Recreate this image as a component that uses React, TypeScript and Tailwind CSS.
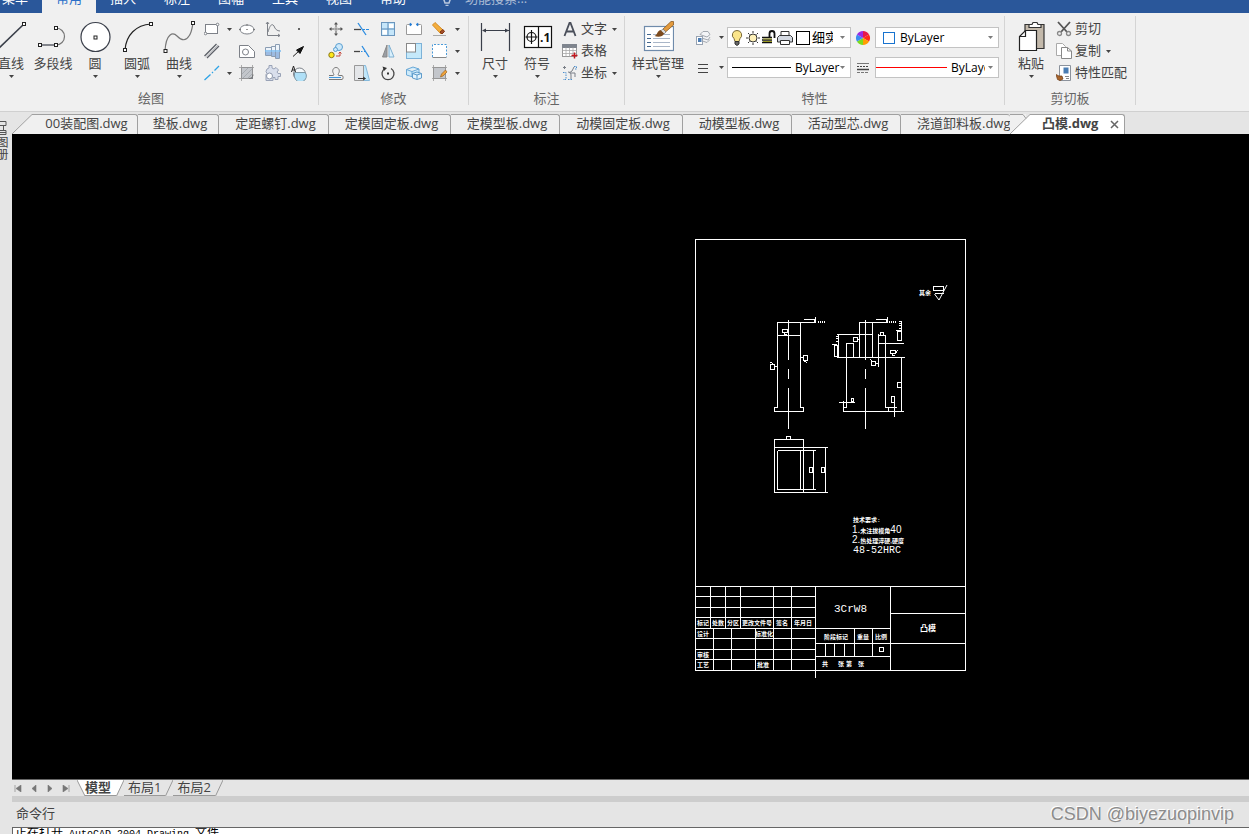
import React from "react";
import { clsx } from "clsx";

const Caret = ({ className }: { className?: string }) => (
  <svg className={clsx("h-[3px] w-[5px] shrink-0", className)} viewBox="0 0 5 3" fill="#444">
    <path d="M0 0h5L2.5 3z" />
  </svg>
);

/* ---------- Large ribbon icons (32 x 32) ---------- */

const Big = ({ children }: { children: React.ReactNode }) => (
  <svg className="size-8 shrink-0" viewBox="0 0 32 32" fill="none" stroke="#3a3f4a" strokeWidth="1.2">
    {children}
  </svg>
);

const Node = ({ x, y }: { x: number; y: number }) => (
  <rect x={x - 1.5} y={y - 1.5} width="3" height="3" fill="#fff" stroke="#222" strokeWidth="1" />
);

const LineIcon = () => (
  <Big>
    <path d="M2 29 29 3" strokeWidth="1.6" />
    <Node x={29} y={3} />
  </Big>
);

const PolylineIcon = () => (
  <Big>
    <path d="M3 24h16" />
    <path d="M19 24a8.5 8.5 0 0 0 0-17" stroke="#777" />
    <Node x={19} y={7} />
    <Node x={3} y={24} />
    <Node x={19} y={24} />
  </Big>
);

const CircleIcon = () => (
  <Big>
    <circle cx="16.5" cy="16" r="14.5" fill="#fff" />
    <Node x={16.5} y={16.5} />
  </Big>
);

const ArcIcon = () => (
  <Big>
    <path d="M4 29C5 14 15 4 30 3" stroke="#222" />
    <Node x={4} y={29} />
    <Node x={30} y={3} />
  </Big>
);

const CurveIcon = () => (
  <Big>
    <path d="M2 30C3 12 10 11 14 15c5 5 9 5 12 0 3-4 3-8 4-13" stroke="#777" />
    <Node x={2.5} y={30} />
    <Node x={30} y={2} />
  </Big>
);

const DimensionIcon = () => (
  <Big>
    <path d="M2.5 2v28M30.5 2v28M4 9.5h26" />
    <path d="M3 9.5 7 7.5v4zM30 9.5l-4-2v4z" fill="#3a3f4a" stroke="none" />
  </Big>
);

const SymbolIcon = () => (
  <Big>
    <rect x="3.5" y="5.5" width="27" height="21" fill="#fff" stroke="#111" />
    <path d="M17.500 5.500v21M10.500 9v14M4.500 16h12" stroke="#111" />
    <circle cx="10.5" cy="16" r="4.5" stroke="#111" />
    <text x="19" y="21" fontSize="12" fontWeight="700" fontFamily="Open Sans, sans-serif" fill="#111" stroke="none">
      .1
    </text>
  </Big>
);

const StyleIcon = () => (
  <Big>
    <rect x="2.5" y="5.5" width="29" height="24" fill="#fff" stroke="#6f8bab" />
    <path d="M5 13.500h4M5 17.500h4M5 21.500h4M5 25.500h4" stroke="#44678e" strokeWidth="1" />
    <path d="M11 13.500h17M11 17.500h17M11 21.500h17M11 25.500h17" stroke="#a9b6c8" strokeWidth="1" />
    <path d="M21 8 29 .5h2.500v3.500l-8 7z" fill="#e39a3c" stroke="#8a5a22" strokeWidth=".8" />
    <path d="M21 8l3 3-2 2-3.500-3z" fill="#ddd" stroke="#666" strokeWidth=".6" />
    <path d="M18.500 9l3.500 3.500c-1 3.500-6 4-9.500 2.500 3-1 2.500-5 6-6z" fill="#7c4a1d" stroke="none" />
  </Big>
);

const PasteIcon = () => (
  <Big>
    <path d="M10 3.500h19v24H10z" fill="#c3b9ab" stroke="#333" />
    <path d="M14 6.500V3.500h3l1-2h4l1 2h3v3z" fill="#fff" stroke="#333" />
    <path d="M10.500 9.500h11v20h-17v-14z" fill="#fff" stroke="#222" />
    <path d="M10.500 9.500v6h-6" stroke="#222" />
  </Big>
);

/* ---------- Small ribbon icons (16 x 16) ---------- */

const Small = ({ children }: { children?: React.ReactNode }) => (
  <svg className="size-4 shrink-0" viewBox="0 0 16 16" fill="none" stroke="#7d8188" strokeWidth="1">
    {children}
  </svg>
);

const RectIcon = () => (
  <Small>
    <rect x="1.500" y="3.500" width="12" height="9" fill="#fff" />
    <circle cx="1.500" cy="12.500" r="1.300" fill="#fff" />
    <circle cx="13.500" cy="3.500" r="1.300" fill="#fff" />
  </Small>
);
const DoubleLineIcon = () => (
  <Small>
    <path d="M.5 13 12.500 1M3 15 15 3" stroke="#5d6068" strokeWidth="1.300" />
    <path d="M1.500 14 14 2" stroke="#b5b7bb" />
  </Small>
);
const AxisLineIcon = () => (
  <Small>
    <path d="M.5 15 6.500 9.500M8 8l1-1M10.500 5.500 15 1" stroke="#2ea3e6" strokeWidth="1.300" />
  </Small>
);
const EllipseIcon = () => (
  <Small>
    <ellipse cx="8" cy="8.500" rx="7" ry="4.500" fill="#fff" />
    <path d="M7.500 8.500h1M7.500 4h1M.5 8.500h1M14.500 8.500h1" stroke="#333" />
  </Small>
);
const PolygonIcon = () => (
  <Small>
    <path d="M.5 2.500h9l6 6v6H.5z" fill="#fff" />
    <circle cx="6.500" cy="9" r="3" fill="#fff" />
  </Small>
);
const HatchIcon = () => (
  <Small>
    <rect x="2.500" y="2.500" width="11" height="11" fill="#c3c6cb" />
    <path d="M0 2.500h15M0 13.500h10M2.500 0v16M13.500 0v10" stroke="#999" strokeWidth=".8" />
    <path d="M3 9l6-6M4 13l9-9M9 13l4-4" stroke="#9ba0a6" strokeWidth=".7" />
    <path d="M10 13.500c3 0 4-2 4-4" stroke="#777" />
  </Small>
);
const FunctionIcon = () => (
  <Small>
    <path d="M2.500 1v13.500H15M1 3l1.500-2L4 3M13 13l2 1.500L13 16" />
    <path d="M3 11c2-7 4-9 6-6 1 3 3 5 6 5" />
  </Small>
);
const ShaftIcon = () => (
  <Small>
    <path d="M.5 4.500h6v8h-6zM6.500 3.500h4v10h-4zM10.500 1.500h4v14h-4z" fill="#eef4fa" stroke="#8b9db3" />
    <path d="M1 9h5v3H1zM7 9h3v4H7zM11 9h3v6h-3z" fill="#9cbbe2" stroke="none" />
    <path d="M0 8h16" stroke="#7dbdf0" strokeWidth="1.500" />
  </Small>
);
const GearIcon = () => (
  <Small>
    <path
      d="M2 4 4 3V.5h3V3l2 1 2-1.500L13.500 5 12 7l1 1.500h2.500v3H13v3h-3v-2H8v3H1v-6l1-1-1-2z"
      fill="#d9dfec"
      stroke="#99a2b6"
    />
    <circle cx="4.500" cy="11" r="3" fill="#fff" stroke="#8e98ab" />
  </Small>
);
const PointIcon = () => (
  <Small>
    <rect x="7" y="7" width="2" height="2" fill="#666" stroke="none" />
  </Small>
);
const ArrowIcon = () => (
  <Small>
    <path d="M2 13.500 8 8" stroke="#222" />
    <path d="M12.500 3.500 5.500 7l3.500 3.500z" fill="#111" stroke="#111" />
  </Small>
);
const DetailIcon = () => (
  <Small>
    <circle cx="8.500" cy="9" r="6" fill="#f5f9fb" />
    <path d="M3.500 7.500h10.800a6 6 0 1 1-10.800 4.500z" fill="#b0e0f7" stroke="#8098a5" />
    <path d="M.5 7 2.500 1 4.500 7M1.200 5h2.600" stroke="#222" />
  </Small>
);
const MoveIcon = () => (
  <Small>
    <path d="M8 2v4M8 10v4M2 8h4M10 8h4" stroke="#555" />
    <path d="M6 3.500l2-2.500 2 2.500zM6 12.500l2 2.500 2-2.500zM3.500 6 1 8l2.500 2zM12.500 6l2.500 2-2.500 2z" fill="#555" stroke="none" />
    <rect x="7" y="7" width="2" height="2" fill="#fff" stroke="#555" strokeWidth=".7" />
  </Small>
);
const TrimIcon = () => (
  <Small>
    <path d="M0 8.500h7" stroke="#444" strokeWidth="1.300" />
    <path d="M9 8.500h2M12 8.500h3" stroke="#2a8be0" />
    <path d="M4 2l8 12" stroke="#2a8be0" strokeWidth="1.300" />
  </Small>
);
const ExtendIcon = () => (
  <Small>
    <path d="M0 8.500h6" stroke="#444" strokeWidth="1.300" />
    <path d="M7 8.500h1.500M10 8.500h1" stroke="#2a8be0" />
    <path d="M8 3l7 11" stroke="#2a8be0" strokeWidth="1.300" />
  </Small>
);
const ArrayIcon = () => (
  <Small>
    <rect x="1.500" y="1.500" width="13" height="13" fill="#c5e6fa" stroke="#6b96bd" />
    <path d="M8 1.500v13M1.500 8h13" stroke="#5b8bb8" />
    <rect x="9" y="3" width="4.500" height="4" fill="#fff" stroke="none" />
    <rect x="2.500" y="9" width="4.500" height="4.500" fill="#fff" stroke="none" />
  </Small>
);
const BreakIcon = () => (
  <Small>
    <path d="M4 3.500H1.500a1 1 0 0 0-1 1v9h15v-9a1 1 0 0 0-1-1H12" fill="#fff" stroke="#999" />
    <path d="M4 2v3l2-1.500zM12 2v3l-2-1.500z" fill="#1c78d4" stroke="#1c78d4" strokeWidth=".6" />
  </Small>
);
const EraseIcon = () => (
  <Small>
    <path d="M.5 4 3 1.500 12 10l-3 3z" fill="#f4ae3d" stroke="#d48a25" />
    <path d="M8 11l3-2.500 1.500 2L10 13z" fill="#a5502c" stroke="#803515" />
    <path d="M1 14.500h13" stroke="#aaa" />
  </Small>
);
const CopyShapeIcon = () => (
  <Small>
    <circle cx="11" cy="4" r="3.500" fill="#cce8fa" stroke="#5b9fd0" />
    <circle cx="7.500" cy="6.500" r="2" fill="#cce8fa" stroke="#5b9fd0" />
    <circle cx="3.500" cy="12" r="2.700" fill="#ffe81a" stroke="#8c7a18" />
    <path d="M8 13h4V9.500M10.500 10.500 12 9l1.500 1.500" stroke="#c0392b" strokeWidth=".9" />
  </Small>
);
const MirrorIcon = () => (
  <Small>
    <path d="M7 2v12H2.500z" fill="#9a9ea4" stroke="#888" />
    <path d="M9 2v12h5z" fill="#d8effc" stroke="#7fb0d2" />
  </Small>
);
const ScaleIcon = () => (
  <Small>
    <rect x=".5" y=".5" width="15" height="15" fill="#c5e9fa" stroke="#7db2d8" />
    <rect x=".5" y=".5" width="9" height="8.500" fill="#fff" stroke="#888" />
  </Small>
);
const RegionIcon = () => (
  <Small>
    <rect x=".5" y="1.500" width="14" height="13" fill="#fff" stroke="none" />
    <path d="M.5 14.500h14" stroke="#888" />
    <path d="M.5 14V1.500h14V14" stroke="#4a9ad8" strokeDasharray="2 1.500" />
  </Small>
);
const OffsetIcon = () => (
  <Small>
    <path d="M1 10.500h4c1 0 1-1 .5-2-2-3 0-6 2.500-6s4.500 3 2.500 6c-.5 1-.5 2 .5 2h3c1.500 0 1.500 4 0 4H1" stroke="#777" />
    <path d="M1 12.500h12" stroke="#3d95dc" />
  </Small>
);
const StretchIcon = () => (
  <Small>
    <path d="M8.500.5h3l4 15h-7z" fill="#bfe6fa" stroke="#84b9dc" />
    <path d="M.5.500h9v15h-9z" fill="#e4e6e9" stroke="#999" />
    <path d="M4 13.500h7M9 12l2.500 1.500L9 15" stroke="#333" />
  </Small>
);
const RotateIcon = () => (
  <Small>
    <path d="M5 3.500a6 6 0 1 0 6 0" stroke="#444" strokeWidth="1.300" />
    <path d="M2.500 1.500 7 3 4 6z" fill="#333" stroke="none" />
    <rect x="7" y="7.500" width="2" height="2" fill="#333" stroke="none" />
  </Small>
);
const BlockIcon = () => (
  <Small>
    <path d="M.5 4.500 7 2l6 2v6l-6 2-6.500-2zM.5 4.500 6 6.500l7-2.500M6 6.500V12" fill="#cdeafa" stroke="#6aa8d6" />
    <path d="M6.500 8.500 11 7l4.500 1.500v4.500L11 14.500 6.500 13zM6.500 8.500l4.500 1.500 4.500-1.500M11 10v4.500" fill="#e3f4fd" stroke="#5f9ccb" />
  </Small>
);
const HatchEditIcon = () => (
  <Small>
    <rect x="1.500" y="2.500" width="12" height="11" fill="#c3c6cb" stroke="#888" />
    <path d="M0 2.500h15M0 13.500h15M1.500 0v16M13.500 0v16" stroke="#999" strokeWidth=".8" />
    <path d="M8.500 12l1-3 4-4 1.500 2-4 4z" fill="#f0a33a" stroke="#9a6424" strokeWidth=".7" />
  </Small>
);
const TextIcon = () => (
  <Small>
    <path d="M2.500 15 7.500 2h1l5 13M4.500 10.500h7" stroke="#4a4f5a" strokeWidth="1.800" />
  </Small>
);
const TableIcon = () => (
  <Small>
    <rect x=".5" y="1.500" width="14" height="12" fill="#fff" stroke="#999" />
    <path d="M.5 1.500h14v3H.5z" fill="#7f858e" stroke="#7f858e" />
    <path d="M.5 7.500h14M.5 10.500h14M4 4.500v9M7.500 4.500v9M11 4.500v9" stroke="#aaa" strokeWidth=".8" />
    <path d="M12.500 9.500v6M9.500 12.500h6" stroke="#c4161c" strokeWidth="1.500" />
  </Small>
);
const CoordIcon = () => (
  <Small>
    <path d="M2.500 1v3M1 2.500h3M6 7c2 0 3 1 3 3v4M12 2l-2 4-3 2M8 8h5v4" stroke="#7a7f87" />
    <path d="M1 7.500h3v7H1M12 1.500h2.500v2.500H12M6 14.500h4" stroke="#4a8fce" strokeDasharray="1.500 1" />
  </Small>
);
const LayerIcon = () => (
  <Small>
    <path d="M5 4.500 8 1.500h5l2 3-3 2.500zM5 7.500l8 2.500 2-3M6 10.500l6 2 3-3" fill="#f4f5f7" stroke="#a4a9b0" />
    <rect x="1.500" y="6.500" width="6" height="8" fill="#fff" stroke="#98a3b2" />
    <rect x="3" y="8" width="3.500" height="4" fill="#4f7fb5" stroke="none" />
  </Small>
);
const LineTypeIcon = () => (
  <Small>
    <path d="M3 4.500h10M3 8.500h10M3 12.500h10" stroke="#444" />
  </Small>
);
const LineWeightIcon = () => (
  <Small>
    <path d="M2 3.500h12" stroke="#777" />
    <path d="M2 6.500h12" stroke="#444" strokeDasharray="2 1" />
    <path d="M2 9.500h12" stroke="#444" strokeWidth="1.500" />
    <path d="M2 12.500h12" stroke="#777" strokeDasharray="3 1" />
  </Small>
);
const BulbIcon = () => (
  <Small>
    <path d="M8 .5a4.500 4.500 0 0 0-3 8l1 3h4l1-3a4.500 4.500 0 0 0-3-8z" fill="#fbe58a" stroke="#7a6a3a" />
    <path d="M6 11.500h4v2.500L8 15.500 6 14z" fill="#666" stroke="#333" />
  </Small>
);
const SunIcon = () => (
  <Small>
    <circle cx="8" cy="8" r="4" fill="#fdf0b8" stroke="#333" />
    <path d="M8 1v2M8 13v2M1 8h2M13 8h2M3 3l1.500 1.500M11.500 11.500 13 13M3 13l1.500-1.500M11.500 4.500 13 3" stroke="#333" />
  </Small>
);
const LockIcon = () => (
  <Small>
    <path d="M8.500 8V3.500a2.500 2.500 0 0 1 5 0V8" stroke="#111" strokeWidth="1.800" />
    <path d="M1 7.500h10M1 10h10M1 12.500h10" stroke="#111" strokeWidth="1.600" />
    <path d="M2 9h9M2 11.500h9" stroke="#9a9a22" />
  </Small>
);
const PrinterIcon = () => (
  <Small>
    <path d="M4 6V1.500h8V6" fill="#fff" stroke="#333" />
    <path d="M.5 7.500 2.500 5.500h11l2 2v4.500H.5z" fill="#d4d9e2" stroke="#333" />
    <path d="M3.500 10.500h9v4h-9z" fill="#fff" stroke="#333" />
  </Small>
);
const WheelIcon = () => (
  <svg className="size-4 shrink-0" viewBox="-8 -8 16 16">
    <path d="M0 0V-7A7 7 0 0 1 6.060-3.500z" fill="#e6194b" />
    <path d="M0 0 6.060-3.500A7 7 0 0 1 6.060 3.500z" fill="#ff2a1a" />
    <path d="M0 0 6.060 3.500A7 7 0 0 1 0 7z" fill="#ff9d00" />
    <path d="M0 0V7A7 7 0 0 1-6.060 3.500z" fill="#7bdc1f" />
    <path d="M0 0-6.060 3.500A7 7 0 0 1-6.060-3.500z" fill="#3b8cf0" />
    <path d="M0 0-6.060-3.500A7 7 0 0 1 0-7z" fill="#9a2be2" />
  </svg>
);
const CutIcon = () => (
  <Small>
    <path d="M2 1 11 11M14 1 5 11" stroke="#555" strokeWidth="1.800" />
    <circle cx="3.500" cy="12.500" r="2" stroke="#888" strokeWidth="1.300" />
    <circle cx="12.500" cy="12.500" r="2" stroke="#888" strokeWidth="1.300" />
  </Small>
);
const CopyIcon = () => (
  <Small>
    <path d="M.5.500h6l3 3v9h-9z" fill="#fff" stroke="#aaa" />
    <path d="M5.500 4.500h6l4 3.500v7.500h-10z" fill="#fff" stroke="#888" />
    <path d="M11.500 4.500v3.500h4" stroke="#888" />
  </Small>
);
const MatchIcon = () => (
  <Small>
    <path d="M3.500.5h11v15h-11z" fill="#fff" stroke="#8b929c" />
    <path d="M7 2h6v7H7z" fill="#4a7db3" stroke="#fff" />
    <path d="M9 11.500h4M10 13.500h3" stroke="#888" />
    <path d="M0 9.500l3 1.500 3 0 1 3-3 1.500-2.500-1z" fill="#a8652c" stroke="#6e3b13" strokeWidth=".7" />
  </Small>
);

/* ---------- Ribbon building blocks ---------- */

interface BigButtonProps {
  label: string;
  icon: React.ReactNode;
  caret?: boolean;
  className?: string;
}

const BigButton = ({ label, icon, caret = true, className = "w-[42px]" }: BigButtonProps) => (
  <button type="button" className={clsx("flex shrink-0 flex-col items-center whitespace-nowrap pt-2", className)}>
    {icon}
    <span className="leading-5">{label}</span>
    {caret && <Caret className="mt-[2px]" />}
  </button>
);

interface ToolProps {
  label: string;
  icon: React.ReactNode;
  caret?: boolean;
}

const Tool = ({ label, icon, caret }: ToolProps) => (
  <button type="button" aria-label={label} className="flex h-[22px] items-center gap-[7px] px-1">
    {icon}
    {caret && <Caret />}
  </button>
);

const TextTool = ({ label, icon, caret }: ToolProps) => (
  <button type="button" className="flex h-[22px] items-center whitespace-nowrap">
    {icon}
    <span className="ml-[3px]">{label}</span>
    {caret && <Caret className="ml-[5px]" />}
  </button>
);

const Group = ({ title, className, children }: { title: string; className: string; children: React.ReactNode }) => (
  <section className={clsx("flex shrink-0 flex-col", className)}>
    <div className="flex h-[75px]">{children}</div>
    <h2 className="text-center leading-5 text-[#666]">{title}</h2>
  </section>
);

const Divider = () => <div className="my-[3px] w-px shrink-0 bg-[#d4d4d4]" />;

interface ComboProps {
  label: string;
  value: string;
  selectClass: string;
  children: React.ReactNode;
}

const Combo = ({ label, value, selectClass, children }: ComboProps) => (
  <div className="flex h-[21px] w-[124px] items-center border border-[#c3c3c3] bg-white pl-1 pr-[5px]">
    {children}
    <select
      aria-label={label}
      defaultValue={value}
      className={clsx("h-full min-w-0 appearance-none overflow-hidden text-clip text-black outline-none", selectClass)}
    >
      <option>{value}</option>
    </select>
    <Caret className="ml-auto opacity-70" />
  </div>
);

const drawTools: ToolProps[][] = [
  [
    { label: "矩形", icon: <RectIcon />, caret: true },
    { label: "椭圆", icon: <EllipseIcon /> },
    { label: "公式曲线", icon: <FunctionIcon /> },
    { label: "点", icon: <PointIcon /> },
  ],
  [
    { label: "平行线", icon: <DoubleLineIcon /> },
    { label: "多边形", icon: <PolygonIcon /> },
    { label: "孔/轴", icon: <ShaftIcon /> },
    { label: "箭头", icon: <ArrowIcon /> },
  ],
  [
    { label: "中心线", icon: <AxisLineIcon />, caret: true },
    { label: "剖面线", icon: <HatchIcon /> },
    { label: "齿形", icon: <GearIcon /> },
    { label: "局部放大", icon: <DetailIcon /> },
  ],
];

const editTools: ToolProps[][] = [
  [
    { label: "平移", icon: <MoveIcon /> },
    { label: "裁剪", icon: <TrimIcon /> },
    { label: "阵列", icon: <ArrayIcon /> },
    { label: "打断", icon: <BreakIcon /> },
    { label: "删除", icon: <EraseIcon />, caret: true },
  ],
  [
    { label: "平移复制", icon: <CopyShapeIcon /> },
    { label: "延伸", icon: <ExtendIcon /> },
    { label: "镜像", icon: <MirrorIcon /> },
    { label: "缩放", icon: <ScaleIcon /> },
    { label: "选择", icon: <RegionIcon />, caret: true },
  ],
  [
    { label: "等距线", icon: <OffsetIcon /> },
    { label: "拉伸", icon: <StretchIcon /> },
    { label: "旋转", icon: <RotateIcon /> },
    { label: "分解", icon: <BlockIcon /> },
    { label: "编辑填充", icon: <HatchEditIcon />, caret: true },
  ],
];

const Ribbon = () => (
  <div className="flex shrink-0 overflow-hidden border-b border-[#d0d0d0] bg-[#f0f0f0] pb-[3px]">
    <Group title="绘图" className="w-[318px] [&>h2]:pr-4">
      <div className="-ml-[10px] flex">
        <BigButton label="直线" icon={<LineIcon />} />
        <BigButton label="多段线" icon={<PolylineIcon />} caret={false} />
        <BigButton label="圆" icon={<CircleIcon />} />
        <BigButton label="圆弧" icon={<ArcIcon />} />
        <BigButton label="曲线" icon={<CurveIcon />} />
      </div>
      <div className="grid grid-cols-[35px_26px_26px_26px] content-start pt-[5px]">
        {drawTools.flat().map((tool) => (
          <Tool key={tool.label} {...tool} />
        ))}
      </div>
    </Group>
    <Divider />
    <Group title="修改" className="w-[149px]">
      <div className="grid grid-cols-[26px_26px_26px_26px_38px] content-start pl-[5px] pt-[5px]">
        {editTools.flat().map((tool) => (
          <Tool key={tool.label} {...tool} />
        ))}
      </div>
    </Group>
    <Divider />
    <Group title="标注" className="w-[155px]">
      <div className="flex pl-[5px]">
        <BigButton label="尺寸" icon={<DimensionIcon />} />
        <BigButton label="符号" icon={<SymbolIcon />} />
      </div>
      <div className="pl-1 pt-[5px]">
        <TextTool label="文字" icon={<TextIcon />} caret />
        <TextTool label="表格" icon={<TableIcon />} />
        <TextTool label="坐标" icon={<CoordIcon />} caret />
      </div>
    </Group>
    <Divider />
    <Group title="特性" className="w-[379px]">
      <BigButton label="样式管理" icon={<StyleIcon />} className="w-[66px]" />
      <div className="flex flex-col gap-[9px] pt-[14px]">
        <div className="flex items-center">
          <button type="button" aria-label="图层" className="flex w-[36px] items-center gap-2 pl-1">
            <LayerIcon />
            <Caret />
          </button>
          <Combo label="当前图层" value="细实线层" selectClass="ml-[2px] w-[21px] text-[13px]">
            <div className="-ml-[3px] flex shrink-0 items-center">
              <BulbIcon />
              <SunIcon />
              <LockIcon />
              <PrinterIcon />
              <span className="ml-[3px] size-[14px] border border-black bg-white" />
            </div>
          </Combo>
          <button type="button" aria-label="颜色" className="px-1">
            <WheelIcon />
          </button>
          <Combo label="颜色" value="ByLayer" selectClass="ml-[5px] w-[60px] text-[12px]">
            <span className="ml-[3px] size-3 shrink-0 border border-[#1873cf]" />
          </Combo>
        </div>
        <div className="flex items-center">
          <button type="button" aria-label="线型设置" className="flex w-[36px] items-center gap-2 pl-1">
            <LineTypeIcon />
            <Caret />
          </button>
          <Combo label="线型" value="ByLayer" selectClass="ml-1 w-[46px] text-[12px]">
            <span className="h-px w-[59px] shrink-0 bg-black" />
          </Combo>
          <button type="button" aria-label="线宽设置" className="px-1">
            <LineWeightIcon />
          </button>
          <Combo label="线宽" value="ByLayer" selectClass="ml-1 w-[34px] text-[12px]">
            <span className="-ml-1 h-px w-[71px] shrink-0 bg-[#f00]" />
          </Combo>
        </div>
      </div>
    </Group>
    <Divider />
    <Group title="剪切板" className="w-[130px]">
      <BigButton label="粘贴" icon={<PasteIcon />} className="ml-[5px] w-[42px]" />
      <div className="pl-1 pt-[5px]">
        <TextTool label="剪切" icon={<CutIcon />} />
        <TextTool label="复制" icon={<CopyIcon />} caret />
        <TextTool label="特性匹配" icon={<MatchIcon />} />
      </div>
    </Group>
    <Divider />
  </div>
);

const menuItems = ["菜单", "常用", "插入", "标注", "图幅", "工具", "视图", "帮助"];

const MenuBar = () => (
  <nav className="flex h-[13px] shrink-0 items-end overflow-hidden bg-[#2a579a] text-white">
    <div className="-ml-[12px] flex shrink-0">
      {menuItems.map((item) => (
        <button
          key={item}
          type="button"
          className={clsx("h-[25px] w-[54px] pb-[5px] leading-5", item === "常用" && "bg-[#f0f0f0] text-[#2a6fc9]")}
        >
          {item}
        </button>
      ))}
    </div>
    <label className="ml-[19px] flex h-[25px] items-center gap-[10px] pb-[5px]">
      <svg className="size-4" viewBox="0 0 16 16" fill="none" stroke="#b9c8de" strokeWidth="1.500">
        <path d="M8 1a5 5 0 0 0-3 9l1 3h4l1-3a5 5 0 0 0-3-9zM6.500 15.500h3" />
      </svg>
      <input
        aria-label="功能搜索"
        placeholder="功能搜索..."
        className="w-24 bg-transparent leading-5 outline-none placeholder:text-[#a9bad4]"
      />
    </label>
  </nav>
);

const docTabs = [
  { name: "00装配图.dwg", size: "w-[106px] pl-1" },
  { name: "垫板.dwg", size: "w-[81px] pl-1" },
  { name: "定距螺钉.dwg", size: "w-[110px] pl-1" },
  { name: "定模固定板.dwg", size: "w-[122px] pl-1" },
  { name: "定模型板.dwg", size: "w-[109px] pl-1" },
  { name: "动模固定板.dwg", size: "w-[123px] pl-1" },
  { name: "动模型板.dwg", size: "w-[109px] pl-1" },
  { name: "活动型芯.dwg", size: "w-[109px] pl-1" },
  { name: "浇道卸料板.dwg", size: "w-[109px] pl-4" },
];

const DocumentTabs = () => (
  <div className="flex h-[22px] shrink-0 items-end overflow-hidden bg-[#e5e5e5]">
    <svg className="h-5 w-5 shrink-0" viewBox="0 0 20 20">
      <path d="M0 20 20 .5V20z" fill="#f0f0f0" />
      <path d="M0 20 20 .5" stroke="#a0a0a0" />
    </svg>
    {docTabs.map((tab) => (
      <button
        key={tab.name}
        type="button"
        className={clsx(
          "h-5 shrink-0 whitespace-nowrap rounded-tr-[3px] border-t border-r border-[#a0a0a0] bg-[#f0f0f0] pb-[3px] leading-4 last-of-type:border-r-0",
          tab.size
        )}
      >
        {tab.name}
      </button>
    ))}
    <svg className="h-5 w-5 shrink-0" viewBox="0 0 20 20">
      <path d="M0 0h16v4L0 20z" fill="#f0f0f0" />
      <path d="M0 20 20 .5V20z" fill="#fff" />
      <path d="M0 20 20 .5M0 .5h13l3 4" fill="none" stroke="#a0a0a0" />
    </svg>
    <div className="flex h-5 shrink-0 items-center rounded-tr-[3px] border-t border-r border-[#a0a0a0] bg-white pl-3 pr-[5px]">
      <button type="button" className="pb-[3px] font-bold leading-4">
        凸模.dwg
      </button>
      <button type="button" aria-label="关闭" className="ml-3">
        <svg className="size-[9px]" viewBox="0 0 9 9" stroke="#666" strokeWidth="1.500">
          <path d="M1 1l7 7M8 1 1 8" />
        </svg>
      </button>
    </div>
  </div>
);

/* ---------- Drawing sheet ---------- */

const titleBlockText: [number, number, string][] = [
  [697, 625, "标记"],
  [712, 625, "处数"],
  [727, 625, "分区"],
  [742, 625, "更改文件号"],
  [776, 625, "签名"],
  [794, 625, "年月日"],
  [697, 636, "设计"],
  [755, 636, "标准化"],
  [697, 657, "审核"],
  [697, 667, "工艺"],
  [757, 667, "批准"],
  [824, 639, "阶段标记"],
  [857, 639, "重量"],
  [875, 639, "比例"],
  [822, 666, "共"],
  [838, 666, "张"],
  [846, 666, "第"],
  [858, 666, "张"],
];

const Sheet = () => (
  <svg
    className="absolute left-[678px] top-[96px] h-[460px] w-[280px]"
    viewBox="690 230 280 460"
    fill="none"
    stroke="#fff"
    role="img"
    aria-label="凸模"
  >
    <g transform="translate(.5 .5)" shapeRendering="crispEdges">
      {/* frame and title block */}
      <path d="M695 239h270v431H695zM695 586h270" />
      <path d="M695 596h120M695 607h120M695 617h120M695 628h195M695 638h120M695 649h120M695 659h120" />
      <path d="M710 586v42M725 586v42M740 586v42M773 586v84M791 586v84M815 586v91" />
      <path d="M713 628v42M731 628v42M755 628v42" />
      <path d="M815 643h75M815 656h75M854 628v28M872 628v28M825 643v13M834 643v13M844 643v13" />
      <path d="M890 586v84M890 613h75M890 643h75M879 647h4v4h-4z" />

      {/* surface finish mark, top right */}
      <path d="M933 286h10v4h-10zM934 293h9" />

      {/* front view */}
      <path d="M777 321v86h-3v4h29v-4h-3v-86M777 322h38v-6M777 335h23M803 319h11v3" />
      <path d="M788 319v40M788 368v10M788 387v41M818 320v2M820 320v2M822 320v2M824 320v2" />
      <path d="M782 329h5v3h-5zM783 334h3M784 332v2M770 364h4v5h-4zM774 366h3M803 355h4v5h-4zM800 357h3M770 362l3 1M804 361l3 1" />

      {/* side view */}
      <path d="M865 319v40M865 368v10M865 387v41M859 321v36M872 321v36M859 322h28v-6M875 319h11v3" />
      <path d="M889 320v2M891 320v2M893 320v2M895 320v2M836 334h36M838 334v23M836 357h68" />
      <path d="M834 345h3v11h-3zM831 344h5M835 338h3M835 341h3M835 336h3M846 407v-64h7v14" />
      <path d="M878 333v33M878 335h7M885 335v72M878 343h25M901 357v54M843 400v11h60M843 407h3M838 402h16" />
      <path d="M888 407v4M885 407h11M894 395v21M897 382h4v5h-4zM891 396h3v6h-3zM851 398h2v3h-2z" />
      <path d="M897 331h4v9h-4zM895 330h6M898 321h3M898 323h3M898 325h3M898 328h3M901 321v10M880 332h3v3h-3z" />
      <path d="M853 337h4v4h-4zM857 339h2M890 350h5v3h-5zM891 355h3M892 353v2M871 361h4v4h-4zM875 363h3M897 350l-2 3M870 359l2 2" />

      {/* top view */}
      <path d="M774 438v54h53M774 447h53M803 438v54M777 450h38M777 489h38M777 450v39M800 450v39M813 450v39" />
      <path d="M825 447v45M774 439h29M786 436h4v3h-4zM809 467h3v5h-3zM821 467h3v5h-3z" />
    </g>
    <path d="M934.500 294l4.500 6 8-15" />

    <g fill="#fff" stroke="none" fontFamily="'Liberation Mono', 'Noto Sans CJK SC', monospace">
      <g fontSize="6" fontWeight="700">
        {titleBlockText.map(([x, y, text], i) => (
          <text key={i} x={x} y={y}>
            {text}
          </text>
        ))}
        <text x="919" y="295">其余</text>
        <text x="853" y="522">技术要求:</text>
      </g>
      <g fontSize="10" fontFamily="'Liberation Sans', 'Noto Sans CJK SC', sans-serif">
        <text x="852" y="533">
          1.
          <tspan fontSize="6" fontWeight="700">未注拔模角</tspan>
          40
        </text>
        <text x="852" y="543">
          2.
          <tspan fontSize="6" fontWeight="700">热处理淬硬,硬度</tspan>
        </text>
      </g>
      <text x="853" y="553" fontSize="10">48-52HRC</text>
      <text x="834" y="612" fontSize="11">3CrW8</text>
      <text x="920" y="631" fontSize="8" fontWeight="700">凸模</text>
    </g>
  </svg>
);

const SlantRight = ({ active }: { active?: boolean }) => (
  <svg className="h-4 w-2 shrink-0" viewBox="0 0 8 16">
    {active && <path d="M0 0h8L0 16z" fill="#fff" />}
    <path d="M8 0 .5 16" stroke="#999" />
  </svg>
);

const SheetTabs = () => (
  <div className="flex h-[17px] shrink-0 items-start overflow-hidden border-t border-[#666] bg-[#e5e5e5]">
    <div className="flex h-4 items-center gap-2 pl-[2px] pr-[7px]">
      {[
        ["第一页", "M1 0v7M7 0v7L2 3.500z"],
        ["上一页", "M6 0v7L2 3.500z"],
        ["下一页", "M2 0v7l4-3.500z"],
        ["最后页", "M1 0v7l5-3.500zM7 0v7"],
      ].map(([label, d]) => (
        <button key={label} type="button" aria-label={label}>
          <svg className="h-[7px] w-2" viewBox="0 0 8 7" fill="#777" stroke="#777" strokeWidth=".6">
            <path d={d} />
          </svg>
        </button>
      ))}
    </div>
    <svg className="h-4 w-2 shrink-0" viewBox="0 0 8 16">
      <path d="M0 0h8v16z" fill="#fff" />
      <path d="M0 0l8 16" stroke="#999" />
    </svg>
    <button type="button" className="h-4 border-b border-[#999] bg-white pb-[2px] pr-[5px] font-bold leading-3">
      模型
    </button>
    <SlantRight active />
    <button type="button" className="h-4 border-b border-[#999] px-1 pb-[2px] leading-3">
      布局1
    </button>
    <SlantRight />
    <button type="button" className="h-4 border-b border-[#999] px-1 pb-[2px] leading-3">
      布局2
    </button>
    <SlantRight />
  </div>
);

const CommandLine = () => (
  <section className="shrink-0 bg-[#e5e5e5]">
    <h2 className="border-t-[6px] border-[#cdcdcd] pb-[3px] pl-1 leading-[22px]">命令行</h2>
    <div className="h-[7px] overflow-hidden border-t border-l border-[#666] bg-white pl-[2px] font-['Liberation_Mono','Noto_Sans_CJK_SC',monospace] text-[12px] leading-[12px] text-black">
      <p className="whitespace-pre">
        正在打开<span className="text-[10px]"> AutoCAD 2004 Drawing </span>文件
      </p>
    </div>
  </section>
);

const App = () => (
  <div className="relative flex h-screen flex-col overflow-hidden bg-[#e5e5e5] font-['Open_Sans','Noto_Sans_CJK_SC',sans-serif] text-[13px] text-[#444]">
    <MenuBar />
    <Ribbon />
    <div className="flex min-h-0 flex-1">
      <aside className="flex w-3 shrink-0 flex-col items-end overflow-hidden pt-2 pr-[5px]">
        <svg className="h-4 w-[7px] shrink-0" viewBox="0 0 7 16" fill="none" stroke="#555">
          <path d="M0 1.500h6v4H0M3.500 5.500v5M0 10.500h6v4H0M0 12.500h6" />
        </svg>
        <span className="text-[12px] leading-3 [writing-mode:vertical-rl]">图册</span>
      </aside>
      <main className="flex min-w-0 flex-1 flex-col">
        <DocumentTabs />
        <div className="relative min-h-0 flex-1 overflow-hidden bg-black">
          <Sheet />
        </div>
        <SheetTabs />
        <CommandLine />
      </main>
    </div>
    <p className="absolute bottom-2 right-[15px] font-['Liberation_Sans',sans-serif] text-[18px] leading-6 text-[#8c8c8c] [text-shadow:-1px_-1px_0_#fff]">
      CSDN @biyezuopinvip
    </p>
  </div>
);

export default App;
